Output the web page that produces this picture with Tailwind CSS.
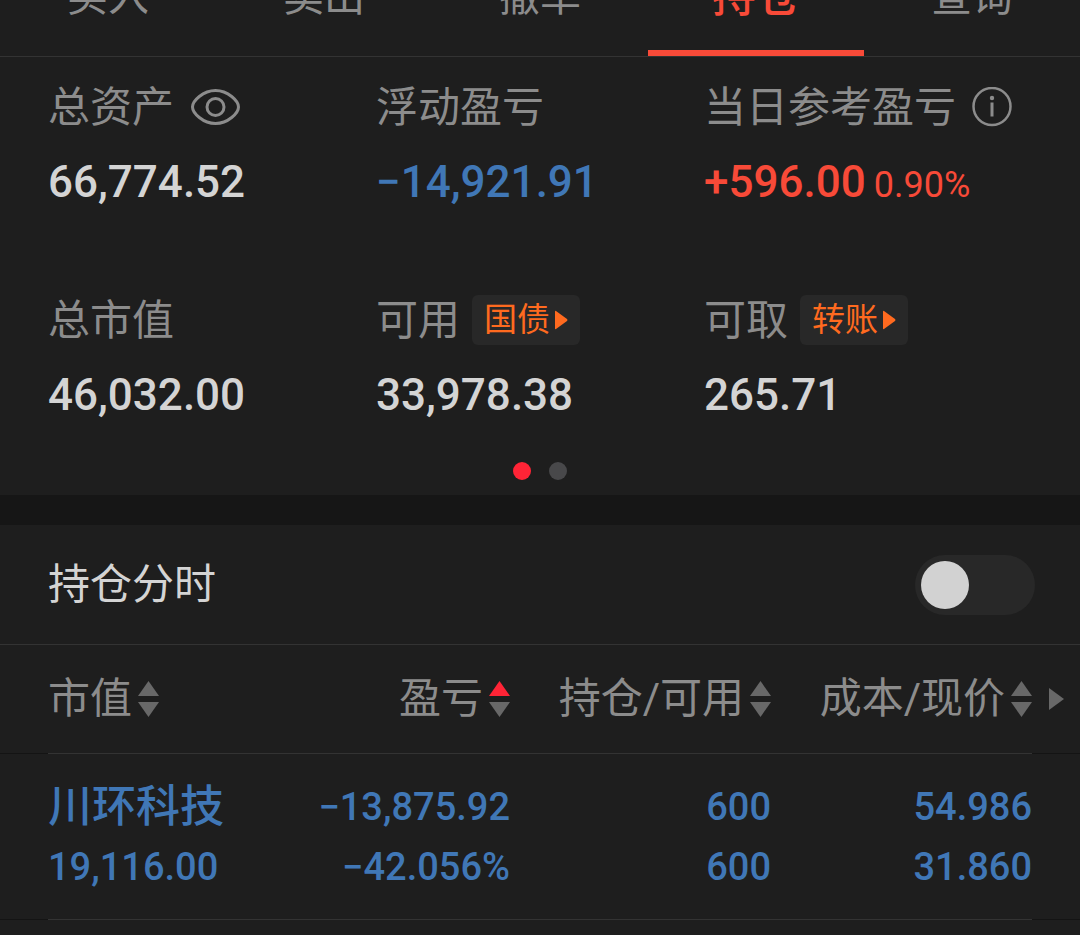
<!DOCTYPE html>
<html lang="zh-CN">
<head>
  <meta charset="UTF-8">
  <meta name="viewport" content="width=device-width, initial-scale=1.0">
  <title>持仓</title>
  <script src="https://cdn.jsdelivr.net/npm/@tailwindcss/browser@4"></script>
</head>
<body class="bg-[#1e1e1e] text-[#d4d4d4] font-[Roboto,'Noto_Sans_CJK_SC',sans-serif] min-h-screen">
  <!-- 图标 -->
  <svg class="hidden">
    <symbol id="sort" viewBox="0 0 21 36">
      <path d="M10.5 0L21 15H0z" fill="var(--up, #686868)"/>
      <path d="M0 21h21L10.5 36z" fill="#686868"/>
    </symbol>
    <symbol id="tri" viewBox="0 0 14 20">
      <path d="M1 1.5v17q0 1 1 .6L13 11q1-1 0-2L2 .9Q1 .5 1 1.5z" fill="#ff6a1f"/>
    </symbol>
  </svg>

  <!-- 顶部标签 -->
  <nav class="grid grid-cols-5 h-[57px] content-end overflow-hidden border-b border-[#333] text-[41px] leading-[42px] text-[#8c8c8c]">
    <button class="pb-8 border-b-6 border-transparent">买入</button>
    <button class="pb-8 border-b-6 border-transparent">卖出</button>
    <button class="pb-8 border-b-6 border-transparent">撤单</button>
    <button class="pb-8 border-b-6 border-[#f84a38] text-[#f84a38] text-[44px] font-medium">持仓</button>
    <button class="pb-8 border-b-6 border-transparent">查询</button>
  </nav>

  <!-- 资产概览 -->
  <section class="px-12 pt-[25px]">
    <dl class="grid grid-cols-3 gap-y-21">
      <div>
        <dt class="flex items-center h-[50px] text-[42px] text-[#8c8c8c]">总资产
          <button class="ml-4" aria-label="隐藏金额">
            <svg class="w-[50px] h-[38px]" viewBox="0 0 50 38" fill="none" stroke="#8c8c8c" stroke-width="3">
              <path d="M2.500 19C2.500 13 13 2.500 25.500 2.500S48.500 13 48.500 19C48.500 25 38 35.500 25.500 35.500S2.500 25 2.500 19z"/>
              <circle cx="25.500" cy="19" r="8.500"/>
            </svg>
          </button>
        </dt>
        <dd class="mt-6 text-[44px] leading-[52px] font-medium">66,774.52</dd>
      </div>
      <div>
        <dt class="flex items-center h-[50px] text-[42px] text-[#8c8c8c]">浮动盈亏</dt>
        <dd class="mt-6 text-[44px] leading-[52px] font-medium text-[#4077b6]">−14,921.91</dd>
      </div>
      <div>
        <dt class="flex items-center h-[50px] text-[42px] text-[#8c8c8c] whitespace-nowrap">当日参考盈亏
          <button class="ml-4" aria-label="说明">
            <svg class="w-10 h-10" viewBox="0 0 40 40" fill="none" stroke="#8c8c8c">
              <circle cx="20" cy="19.500" r="18.500" stroke-width="2.500"/>
              <path d="M20 15.500v14" stroke-width="3"/>
              <circle cx="20" cy="11" r="2.200" fill="#8c8c8c" stroke="none"/>
            </svg>
          </button>
        </dt>
        <dd class="mt-6 text-[44px] leading-[52px] font-medium text-[#f84a38] whitespace-nowrap">+596.00<span class="ml-2 text-[36px] font-normal">0.90%</span></dd>
      </div>
      <div>
        <dt class="flex items-center h-[50px] text-[42px] text-[#8c8c8c]">总市值</dt>
        <dd class="mt-6 text-[44px] leading-[52px] font-medium">46,032.00</dd>
      </div>
      <div>
        <dt class="flex items-center h-[50px] text-[42px] text-[#8c8c8c]">可用
          <button class="flex items-center gap-1 ml-3 px-3 h-[50px] rounded-md bg-[#282828] text-[33px] text-[#ff6a1f]">国债
            <svg class="w-[14px] h-5"><use href="#tri"/></svg>
          </button>
        </dt>
        <dd class="mt-6 text-[44px] leading-[52px] font-medium">33,978.38</dd>
      </div>
      <div>
        <dt class="flex items-center h-[50px] text-[42px] text-[#8c8c8c]">可取
          <button class="flex items-center gap-1 ml-3 px-3 h-[50px] rounded-md bg-[#282828] text-[33px] text-[#ff6a1f]">转账
            <svg class="w-[14px] h-5"><use href="#tri"/></svg>
          </button>
        </dt>
        <dd class="mt-6 text-[44px] leading-[52px] font-medium">265.71</dd>
      </div>
    </dl>
    <!-- 分页点 -->
    <div class="flex justify-center gap-[18px] pt-[41px] pb-[15px]">
      <span class="size-[18px] rounded-full bg-[#ff2436]"></span>
      <span class="size-[18px] rounded-full bg-[#48484a]"></span>
    </div>
  </section>

  <!-- 持仓分时 -->
  <label class="flex items-center justify-between h-[149px] border-t-30 border-[#161616] pl-12 pr-[45px] text-[42px]">
    持仓分时
    <input type="checkbox" role="switch" class="appearance-none w-[120px] h-[60px] p-[6px] rounded-full bg-[#282828] before:block before:size-12 before:rounded-full before:bg-[#d2d2d2] checked:before:ml-auto">
  </label>

  <!-- 持仓列表 -->
  <table class="w-full table-fixed border-t border-[#333] text-right whitespace-nowrap">
    <thead class="text-[42px] text-[#8c8c8c]">
      <tr class="h-[109px]">
        <td class="w-12 border-b border-[#141414]"></td>
        <th class="border-b border-[#333] font-normal">
          <button class="flex items-center gap-[6px] leading-[60px]">市值<svg class="w-[21px] h-9"><use href="#sort"/></svg></button>
        </th>
        <th class="w-29/120 border-b border-[#333] font-normal">
          <button class="flex items-center gap-[6px] ml-auto leading-[60px]">盈亏<svg class="w-[21px] h-9 [--up:#ff2436]"><use href="#sort"/></svg></button>
        </th>
        <th class="w-29/120 border-b border-[#333] font-normal">
          <button class="flex items-center gap-[6px] ml-auto leading-[60px]">持仓/可用<svg class="w-[21px] h-9"><use href="#sort"/></svg></button>
        </th>
        <th class="w-29/120 border-b border-[#333] font-normal">
          <button class="flex items-center gap-[6px] ml-auto leading-[60px]">成本/现价<svg class="w-[21px] h-9"><use href="#sort"/></svg></button>
        </th>
        <td class="w-12 border-b border-[#141414]">
          <button class="block ml-4" aria-label="更多列"><svg class="w-4 h-[22px]" viewBox="0 0 16 22"><path d="M1 0l15 11L1 22z" fill="#686868"/></svg></button>
        </td>
      </tr>
    </thead>
    <tbody class="text-[38px] leading-[60px] font-medium text-[#4077b6]">
      <tr class="h-[166px]">
        <td class="border-b border-[#141414]"></td>
        <td class="border-b border-[#333] text-left"><a href="#" class="block text-[44px]">川环科技</a>19,116.00</td>
        <td class="border-b border-[#333]">−13,875.92<br>−42.056%</td>
        <td class="border-b border-[#333]">600<br>600</td>
        <td class="border-b border-[#333]">54.986<br>31.860</td>
        <td class="border-b border-[#141414]"></td>
      </tr>
    </tbody>
  </table>
</body>
</html>
